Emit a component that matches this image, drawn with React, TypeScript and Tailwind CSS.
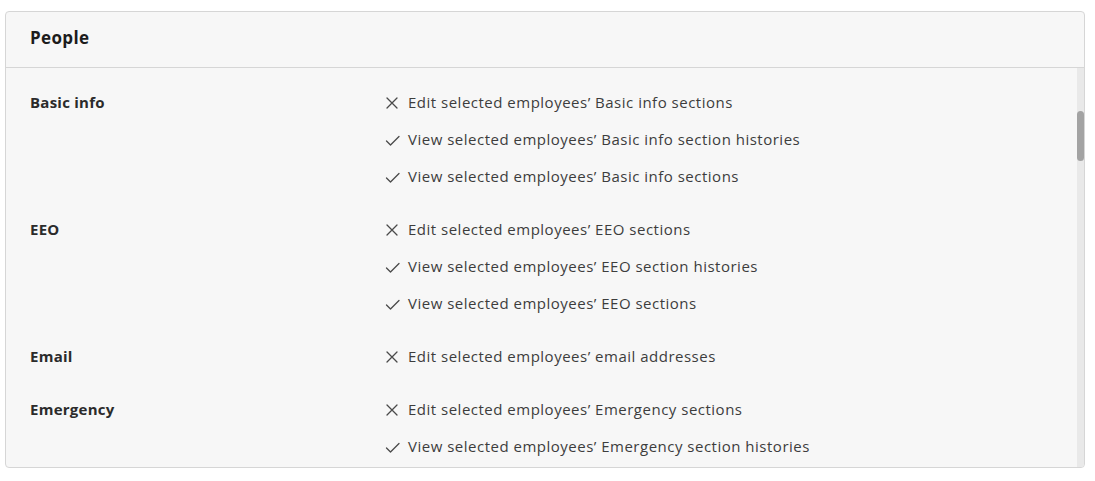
import React from 'react';

type Permission = { allowed: boolean; text: string };
type Group = { name: string; permissions: Permission[] };

const groups: Group[] = [
  {
    name: 'Basic info',
    permissions: [
      { allowed: false, text: 'Edit selected employees’ Basic info sections' },
      { allowed: true, text: 'View selected employees’ Basic info section histories' },
      { allowed: true, text: 'View selected employees’ Basic info sections' },
    ],
  },
  {
    name: 'EEO',
    permissions: [
      { allowed: false, text: 'Edit selected employees’ EEO sections' },
      { allowed: true, text: 'View selected employees’ EEO section histories' },
      { allowed: true, text: 'View selected employees’ EEO sections' },
    ],
  },
  {
    name: 'Email',
    permissions: [{ allowed: false, text: 'Edit selected employees’ email addresses' }],
  },
  {
    name: 'Emergency',
    permissions: [
      { allowed: false, text: 'Edit selected employees’ Emergency sections' },
      { allowed: true, text: 'View selected employees’ Emergency section histories' },
      { allowed: true, text: 'View selected employees’ Emergency sections' },
    ],
  },
];

const XIcon = () => (
  <svg width="14" height="14" viewBox="0 0 14 14" fill="none" stroke="#4a4a4a" strokeWidth="1.3" strokeLinecap="round">
    <path d="M2 2l10 10M12 2L2 12" />
  </svg>
);

const CheckIcon = () => (
  <svg width="15" height="14" viewBox="0 0 15 14" fill="none" stroke="#4a4a4a" strokeWidth="1.3" strokeLinecap="round" strokeLinejoin="round">
    <path d="M1.5 8l4 4L14 3.5" />
  </svg>
);

const App: React.FC = () => {
  return (
    <div className="w-[1095px] h-[481px] bg-white pt-[11px] pl-[5px]" style={{ fontFamily: '"Open Sans", Lato, sans-serif' }}>
      <div className="w-[1080px] h-[457px] bg-[#f7f7f7] border border-[#d6d6d6] rounded-[4px] flex flex-col overflow-hidden">
        <div className="h-[56px] shrink-0 border-b border-[#d6d6d6] flex items-center px-6 pb-[4px]">
          <h2 className="text-[17px] font-bold tracking-[0.35px] text-[#1c1c1c]">People</h2>
        </div>
        <div className="flex flex-1 min-h-0">
          <div className="flex-1 overflow-hidden pt-4 pl-6">
            {groups.map((group, i) => (
              <div key={group.name} className={`flex ${i > 0 ? 'mt-4' : ''}`}>
                <div className="w-[355px] shrink-0 h-[37px] flex items-center text-[15px] font-bold tracking-[0.25px] text-[#2b2b2b]">
                  {group.name}
                </div>
                <div className="flex flex-col">
                  {group.permissions.map((p) => (
                    <div key={p.text} className="h-[37px] flex items-center text-[15px] tracking-[0.5px] text-[#3d3d3d]">
                      <span className="w-[23px] shrink-0 flex items-center">
                        {p.allowed ? <CheckIcon /> : <XIcon />}
                      </span>
                      {p.text}
                    </div>
                  ))}
                </div>
              </div>
            ))}
          </div>
          <div className="w-[7px] shrink-0 bg-[#e9e9e9] pt-[43px]">
            <div className="h-[50px] w-[7px] rounded-full bg-[#a3a3a3]" />
          </div>
        </div>
      </div>
    </div>
  );
};

export default App;
